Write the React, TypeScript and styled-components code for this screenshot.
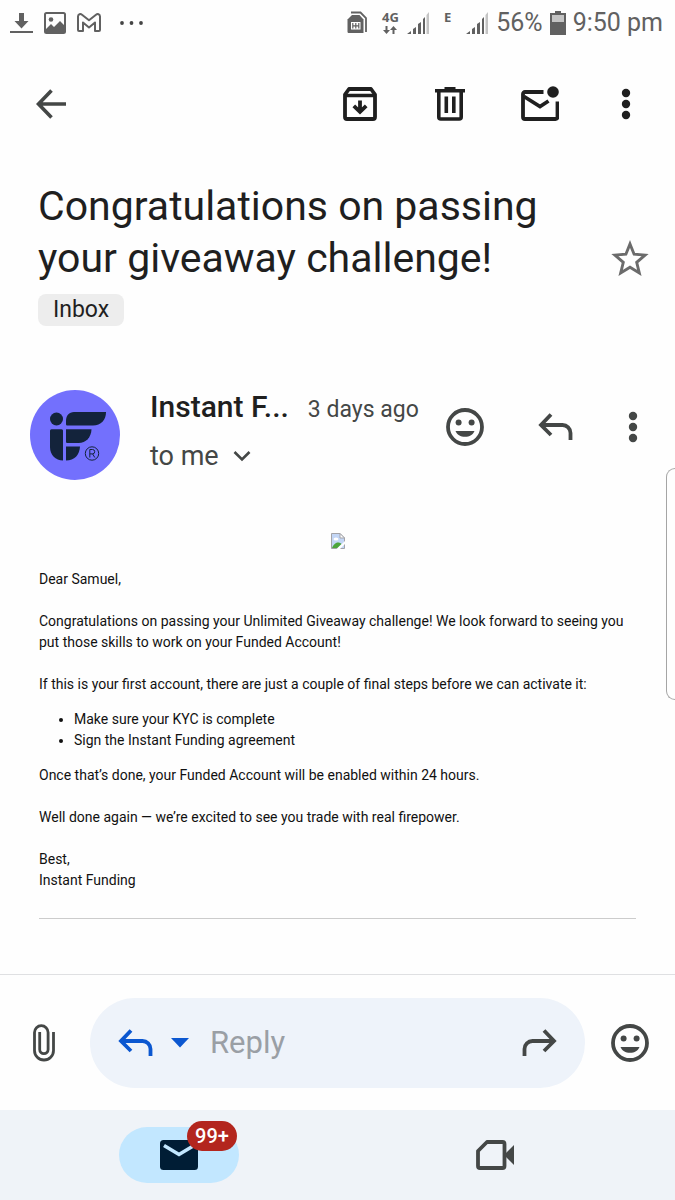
import React from "react";
import styled, { createGlobalStyle } from "styled-components";

const GlobalStyle = createGlobalStyle`
  * { box-sizing: border-box; }
  body { margin: 0; background: #fefefe; }
  button, input { font: inherit; }
`;

const sans = `Roboto, "Noto Sans", sans-serif`;

const Screen = styled.div`
  position: relative;
  display: flex;
  flex-direction: column;
  min-height: 100vh;
  background: #fefefe;
  color: #1f1f1f;
  font-family: ${sans};
`;

const StatusBar = styled.header`
  display: flex;
  justify-content: space-between;
  align-items: center;
  height: 46px;
  padding: 0 12px 0 8px;
  color: #616161;
`;

const StatusGroup = styled.div<{ $gap: number }>`
  display: flex;
  align-items: center;
  gap: ${(p) => p.$gap}px;
`;

const StatusText = styled.span`
  font-size: 25px;
  line-height: 46px;
  white-space: nowrap;
`;

const NetworkLabel = styled.span`
  display: flex;
  flex-direction: column;
  align-items: center;
  gap: 2px;
  height: 24px;
  font-size: 13px;
  line-height: 13px;
  font-weight: 700;
  font-family: "Noto Sans", sans-serif;
`;

const Toolbar = styled.nav`
  display: flex;
  align-items: center;
  height: 116px;
  padding: 0 8px 0 6px;
`;

const Spacer = styled.div`
  flex: 1;
`;

const IconButton = styled.button<{ $width?: number }>`
  display: flex;
  align-items: center;
  justify-content: center;
  flex: none;
  width: ${(p) => p.$width ?? 90}px;
  height: 52px;
  padding: 0;
  border: 0;
  background: none;
  color: inherit;
`;

const Main = styled.main`
  flex: 1;
`;

const SubjectBlock = styled.section`
  display: flex;
  align-items: flex-end;
  padding: 18px 0 0 38px;
`;

const Subject = styled.h1`
  flex: 1;
  margin: 0;
  font-size: 41px;
  line-height: 52px;
  font-weight: 400;
`;

const LabelRow = styled.div`
  display: flex;
  padding: 10px 38px 0;
`;

const LabelChip = styled.button`
  height: 32px;
  padding: 0 15px;
  border: 0;
  border-radius: 8px;
  background: #ededed;
  color: #1f1f1f;
  font-size: 23px;
  line-height: 32px;
`;

const SenderRow = styled.section`
  display: flex;
  align-items: center;
  padding: 63px 9px 0 30px;
  color: #444746;
`;

const SenderInfo = styled.div`
  flex: 1;
  min-width: 0;
  padding: 0 0 6px 30px;
`;

const SenderLine = styled.div`
  display: flex;
  align-items: baseline;
  gap: 19px;
  height: 49px;
  line-height: 36px;
  white-space: nowrap;
`;

const SenderName = styled.span`
  color: #1f1f1f;
  font-size: 30px;
  font-weight: 500;
`;

const SentDate = styled.span`
  font-size: 23px;
`;

const Recipient = styled.button`
  display: flex;
  align-items: center;
  gap: 14px;
  padding: 0;
  border: 0;
  background: none;
  color: inherit;
  font-size: 27px;
  line-height: 36px;
`;

const Actions = styled.div`
  display: flex;
  padding-bottom: 16px;
`;

const Message = styled.article`
  padding: 53px 39px 0;
  color: #111;
  font-size: 14px;
  line-height: 21px;

  p { margin: 0 0 21px; }
  ul { margin: -7px 0 14px; padding-left: 35px; }
  hr { margin: 27px 0 0; border: 0; border-top: 1px solid #ccc; }
`;

const ImageSlot = styled.div`
  display: flex;
  justify-content: center;
  height: 36px;
`;

const ReplyBar = styled.form`
  display: flex;
  align-items: center;
  height: 136px;
  border-top: 1px solid #dfe0e2;
  color: #444746;
`;

const ReplyPill = styled.div`
  display: flex;
  align-items: center;
  flex: 1;
  min-width: 0;
  height: 90px;
  border-radius: 45px;
  background: #eef3fa;
`;

const ReplyModes = styled.div`
  display: flex;
  padding: 0 15px;
  color: #0b57d0;
`;

const ReplyInput = styled.input`
  flex: 1;
  min-width: 0;
  padding: 0;
  border: 0;
  outline: 0;
  background: none;
  color: #1f1f1f;
  font-size: 31px;
  line-height: 40px;

  &::placeholder { color: #9a9fa5; opacity: 1; }
`;

const BottomNav = styled.nav`
  display: grid;
  grid-template-columns: 1fr 1fr;
  justify-items: center;
  align-items: center;
  height: 90px;
  padding: 0 22px 0 21px;
  background: #eff3f8;
`;

const NavLink = styled.a<{ $active?: boolean }>`
  position: relative;
  display: flex;
  align-items: center;
  justify-content: center;
  width: 120px;
  height: 56px;
  border-radius: 28px;
  background: ${(p) => (p.$active ? "#c2e7ff" : "transparent")};
  color: ${(p) => (p.$active ? "#001d35" : "#444746")};
`;

const Badge = styled.span`
  position: absolute;
  top: -6px;
  right: 2px;
  width: 50px;
  height: 30px;
  border-radius: 15px;
  background: #b3261e;
  color: #fff;
  font-size: 20px;
  line-height: 30px;
  font-weight: 500;
  text-align: center;
`;

const EdgePanel = styled.aside`
  position: absolute;
  top: 468px;
  right: 0;
  width: 9px;
  height: 232px;
  border: 1px solid #a5a5a5;
  border-right: 0;
  border-radius: 9px 0 0 9px;
  background: #fefefe;
`;

const Svg = ({ w, h, children, label }: { w: number; h: number; children: React.ReactNode; label?: string }) => (
  <svg width={w} height={h} viewBox={`0 0 ${w} ${h}`} fill="none" role={label ? "img" : undefined} aria-label={label} aria-hidden={label ? undefined : true}>
    {children}
  </svg>
);

const Signal = () => (
  <Svg w={24} h={24}>
    <path d="M1 23l4-3v3zM7 18l3-2v7H7zM12 13l3-2v12h-3zM17 8l2-2v17h-2z" fill="#616161" />
    <path d="M20.500 4l2.500-3v22h-2.500z" fill="#c4c4c4" />
  </Svg>
);

const MoreIcon = () => (
  <Svg w={10} h={32}>
    <g fill="currentColor">
      <circle cx="5" cy="5" r="4.200" />
      <circle cx="5" cy="16" r="4.200" />
      <circle cx="5" cy="27" r="4.200" />
    </g>
  </Svg>
);

const SmileIcon = () => (
  <Svg w={38} h={38}>
    <circle cx="19" cy="19" r="17" stroke="currentColor" strokeWidth="3.8" />
    <circle cx="12.6" cy="14.4" r="3" fill="currentColor" />
    <circle cx="25.6" cy="14.4" r="3" fill="currentColor" />
    <path d="M9.5 23h19c-1.4 3.6-5 5.8-9.5 5.8S10.900 26.600 9.500 23z" fill="currentColor" />
  </Svg>
);

const ReplyIcon = () => (
  <Svg w={36} h={30}>
    <path d="M14 2.500L4 13l10 10M4 13h21.500a8 8 0 0 1 8 8v7" stroke="currentColor" strokeWidth="3.800" />
  </Svg>
);

const ForwardIcon = () => (
  <Svg w={36} h={30}>
    <path d="M22 2.500L32 13 22 23M32 13H10.500a8 8 0 0 0-8 8v7" stroke="currentColor" strokeWidth="3.800" />
  </Svg>
);

const Logo = () => (
  <Svg w={90} h={90} label="Instant Funding">
    <circle cx="45" cy="45" r="45" fill="#7370fd" />
    <g fill="#13233b">
      <circle cx="26.500" cy="29" r="6.500" />
      <path d="M36 34v-3c0-5.500 3-9 8-9h32c0 8-5 13.500-13 13.500H37.500c-1 0-1.500-.5-1.500-1.500z" />
      <path d="M20 41c0-1 .5-1.700 1.500-1.700h10c1 0 1.500.7 1.500 1.700v29.500C25.500 70.500 20 65 20 57z" />
      <path d="M36 39.300h25.500c-.3 8.200-5.500 13.700-13 13.700H37.500c-1 0-1.500-.5-1.500-1.500z" />
      <path d="M36 56.500h14c-.5 8.500-5.500 14-14 14z" />
    </g>
    <circle cx="62" cy="63.500" r="6.700" stroke="#13233b" strokeWidth="1" />
    <path d="M59.800 67.500v-8h2.700a2.200 2.200 0 0 1 0 4.400h-2.700m2.800 0l2.200 3.600" stroke="#13233b" strokeWidth="1" />
  </Svg>
);

const App = () => (
  <Screen>
    <GlobalStyle />
    <StatusBar>
      <StatusGroup $gap={10}>
        <Svg w={26} h={24} label="Download">
          <path d="M11 2h5v8h4.500l-7 7.500-7-7.500H11z" fill="#616161" />
          <path d="M2 20h23v2H2z" fill="#616161" />
        </Svg>
        <Svg w={22} h={22} label="Picture">
          <rect x="1" y="1" width="20" height="20" rx="1.500" stroke="#616161" strokeWidth="2" />
          <circle cx="7" cy="7.500" r="2.300" fill="#616161" />
          <path d="M2 17l5-5 3 3 6-6 5 5v7H2z" fill="#616161" />
        </Svg>
        <Svg w={26} h={22} label="Gmail">
          <path d="M2 18V4.500C2 2 4.500 1.500 6 2.700l7 5.500 7-5.500c1.500-1.200 4-.7 4 1.800V18c0 .6-.4 1-1 1h-4v-8.500l-6 5-6-5V19H3c-.6 0-1-.4-1-1z" stroke="#616161" strokeWidth="2" strokeLinejoin="round" />
        </Svg>
        <Svg w={34} h={22} label="More notifications">
          <g fill="#444">
            <circle cx="10" cy="11" r="1.900" />
            <circle cx="19.500" cy="11" r="1.900" />
            <circle cx="29" cy="11" r="1.900" />
          </g>
        </Svg>
      </StatusGroup>
      <StatusGroup $gap={7}>
        <Svg w={28} h={24} label="SIM cards">
          <path d="M4 1.500h9.500l5.500 5.500v14" stroke="#616161" strokeWidth="1.800" />
          <path d="M5 4h7.500L16.500 8.500V22H2c-1 0-1.500-.5-1.500-1.500V8.500z" fill="#616161" />
          <path d="M4 11h9.500v7.500H4z" fill="#fff" />
          <path d="M5.800 12v5.500M8.800 12v5.500M11.800 12v5.500M5.800 14.800h6" stroke="#616161" strokeWidth="1.200" />
        </Svg>
        <NetworkLabel>
          4G
          <Svg w={14} h={8}>
            <path d="M2.500 0h2v4H7L3.500 8 0 4h2.500zM9.500 8h2V4H14l-3.500-4L7 4h2.500z" fill="#616161" />
          </Svg>
        </NetworkLabel>
        <Signal />
        <Spacer />
        <NetworkLabel>E</NetworkLabel>
        <Spacer />
        <Signal />
        <StatusText>56%</StatusText>
        <Svg w={16} h={24} label="Battery">
          <path d="M5 0h6v2h5v22H0V2h5z" fill="#616161" />
          <path d="M2 4h12v7H2z" fill="#c4c4c4" />
        </Svg>
        <StatusText>9:50 pm</StatusText>
      </StatusGroup>
    </StatusBar>

    <Toolbar aria-label="Message actions">
      <IconButton aria-label="Back">
        <Svg w={30} h={30}>
          <path d="M15.500 1.500L2.500 15l13 13.500M2.500 15H30" stroke="#444746" strokeWidth="3.600" />
        </Svg>
      </IconButton>
      <Spacer />
      <IconButton aria-label="Archive">
        <Svg w={34} h={34}>
          <path d="M2 7.500l4-5.500h22l4 5.500V30a2 2 0 0 1-2 2H4a2 2 0 0 1-2-2z" stroke="#1f1f1f" strokeWidth="3.800" strokeLinejoin="round" />
          <path d="M3 8.500h28" stroke="#1f1f1f" strokeWidth="3.500" />
          <path d="M17 13.500v11M10.800 18.800l6.200 6 6.200-6" stroke="#1f1f1f" strokeWidth="3.800" />
        </Svg>
      </IconButton>
      <IconButton aria-label="Delete">
        <Svg w={30} h={34}>
          <path d="M0 3.700h30M9.500 1.800h11" stroke="#1f1f1f" strokeWidth="3.600" />
          <path d="M3.800 4v26a2 2 0 0 0 2 2h18.400a2 2 0 0 0 2-2V4M11.300 9.500v16.500M18.800 9.500v16.500" stroke="#1f1f1f" strokeWidth="3.600" />
        </Svg>
      </IconButton>
      <IconButton aria-label="Mark as unread">
        <Svg w={38} h={36}>
          <path d="M22.500 6H4a2 2 0 0 0-2 2v23a2 2 0 0 0 2 2h30.500a2 2 0 0 0 2-2V15.500" stroke="#1f1f1f" strokeWidth="3.800" />
          <path d="M3 10.500l16 10 8.500-5.500" stroke="#1f1f1f" strokeWidth="3.800" />
          <circle cx="32" cy="6" r="5.800" fill="#1f1f1f" />
        </Svg>
      </IconButton>
      <IconButton $width={82} aria-label="More options">
        <MoreIcon />
      </IconButton>
    </Toolbar>

    <Main>
      <SubjectBlock>
        <Subject>
          Congratulations on passing
          <br />
          your giveaway challenge!
        </Subject>
        <IconButton aria-label="Star">
          <Svg w={38} h={38}>
            <path d="M19 5l4.100 10.200 11 .9-8.400 7.200 2.600 10.700-9.300-5.700-9.300 5.700 2.600-10.700-8.400-7.200 11-.9z" stroke="#6b6b6b" strokeWidth="2.900" />
          </Svg>
        </IconButton>
      </SubjectBlock>
      <LabelRow>
        <LabelChip>Inbox</LabelChip>
      </LabelRow>

      <SenderRow>
        <Logo />
        <SenderInfo>
          <SenderLine>
            <SenderName>Instant F...</SenderName>
            <SentDate>3 days ago</SentDate>
          </SenderLine>
          <Recipient>
            to me
            <Svg w={18} h={12}>
              <path d="M1.500 2l7.500 7.500L16.500 2" stroke="currentColor" strokeWidth="2.600" />
            </Svg>
          </Recipient>
        </SenderInfo>
        <Actions>
          <IconButton aria-label="Add reaction">
            <SmileIcon />
          </IconButton>
          <IconButton aria-label="Reply">
            <ReplyIcon />
          </IconButton>
          <IconButton $width={66} aria-label="More message options">
            <MoreIcon />
          </IconButton>
        </Actions>
      </SenderRow>

      <Message>
        <ImageSlot>
          <Svg w={14} h={16} label="Missing image">
            <path d="M.5 15.500V.5H9L13.500 5v10.500z" fill="#c3d6f6" stroke="#a3a3a8" />
            <path d="M9 .5V5h4.500z" fill="#fff" stroke="#a3a3a8" />
            <ellipse cx="5" cy="6" rx="2.500" ry="1.500" fill="#fff" />
            <path d="M1 15c1-3 3.500-5.500 6-5.500 1.500 0 2.500.5 3.500 1.500L6.500 15z" fill="#4da53c" />
            <path d="M5.500 16l8.500-8v3l-5 5z" fill="#fefefe" />
          </Svg>
        </ImageSlot>
        <p>Dear Samuel,</p>
        <p>
          Congratulations on passing your Unlimited Giveaway challenge! We look forward to seeing you
          put those skills to work on your Funded Account!
        </p>
        <p>If this is your first account, there are just a couple of final steps before we can activate it:</p>
        <ul>
          <li>Make sure your KYC is complete</li>
          <li>Sign the Instant Funding agreement</li>
        </ul>
        <p>Once that’s done, your Funded Account will be enabled within 24 hours.</p>
        <p>Well done again — we’re excited to see you trade with real firepower.</p>
        <p>
          Best,
          <br />
          Instant Funding
        </p>
        <hr />
      </Message>
    </Main>

    <ReplyBar>
      <IconButton type="button" aria-label="Attach file">
        <Svg w={24} h={38}>
          <path d="M20.500 8v18.500a9.500 9.500 0 0 1-19 0V8.500a6.800 6.800 0 0 1 13.600 0v17a4.200 4.200 0 0 1-8.400 0V8" stroke="currentColor" strokeWidth="2.800" />
        </Svg>
      </IconButton>
      <ReplyPill>
        <ReplyModes>
          <IconButton type="button" $width={60} aria-label="Send reply">
            <ReplyIcon />
          </IconButton>
          <IconButton type="button" $width={30} aria-label="Choose reply type">
            <Svg w={18} h={10}>
              <path d="M0 0h18l-9 9.500z" fill="currentColor" />
            </Svg>
          </IconButton>
        </ReplyModes>
        <ReplyInput aria-label="Reply" placeholder="Reply" />
        <IconButton type="button" aria-label="Forward">
          <ForwardIcon />
        </IconButton>
      </ReplyPill>
      <IconButton type="button" aria-label="Insert emoji">
        <SmileIcon />
      </IconButton>
    </ReplyBar>

    <BottomNav aria-label="Apps">
      <NavLink href="#mail" $active aria-label="Mail">
        <Svg w={38} h={30}>
          <rect width="38" height="30" rx="3.500" fill="currentColor" />
          <path d="M4 5.500l15 9 15-9" stroke="#c2e7ff" strokeWidth="3.600" />
        </Svg>
        <Badge>99+</Badge>
      </NavLink>
      <NavLink href="#meet" aria-label="Meet">
        <Svg w={38} h={30}>
          <path d="M11 2h15.500a2 2 0 0 1 2 2v22a2 2 0 0 1-2 2H4a2 2 0 0 1-2-2V11z" stroke="currentColor" strokeWidth="3.800" strokeLinejoin="round" />
          <path d="M28 15l10-10v20z" fill="currentColor" />
        </Svg>
      </NavLink>
    </BottomNav>

    <EdgePanel aria-label="Edge panel" />
  </Screen>
);

export default App;
